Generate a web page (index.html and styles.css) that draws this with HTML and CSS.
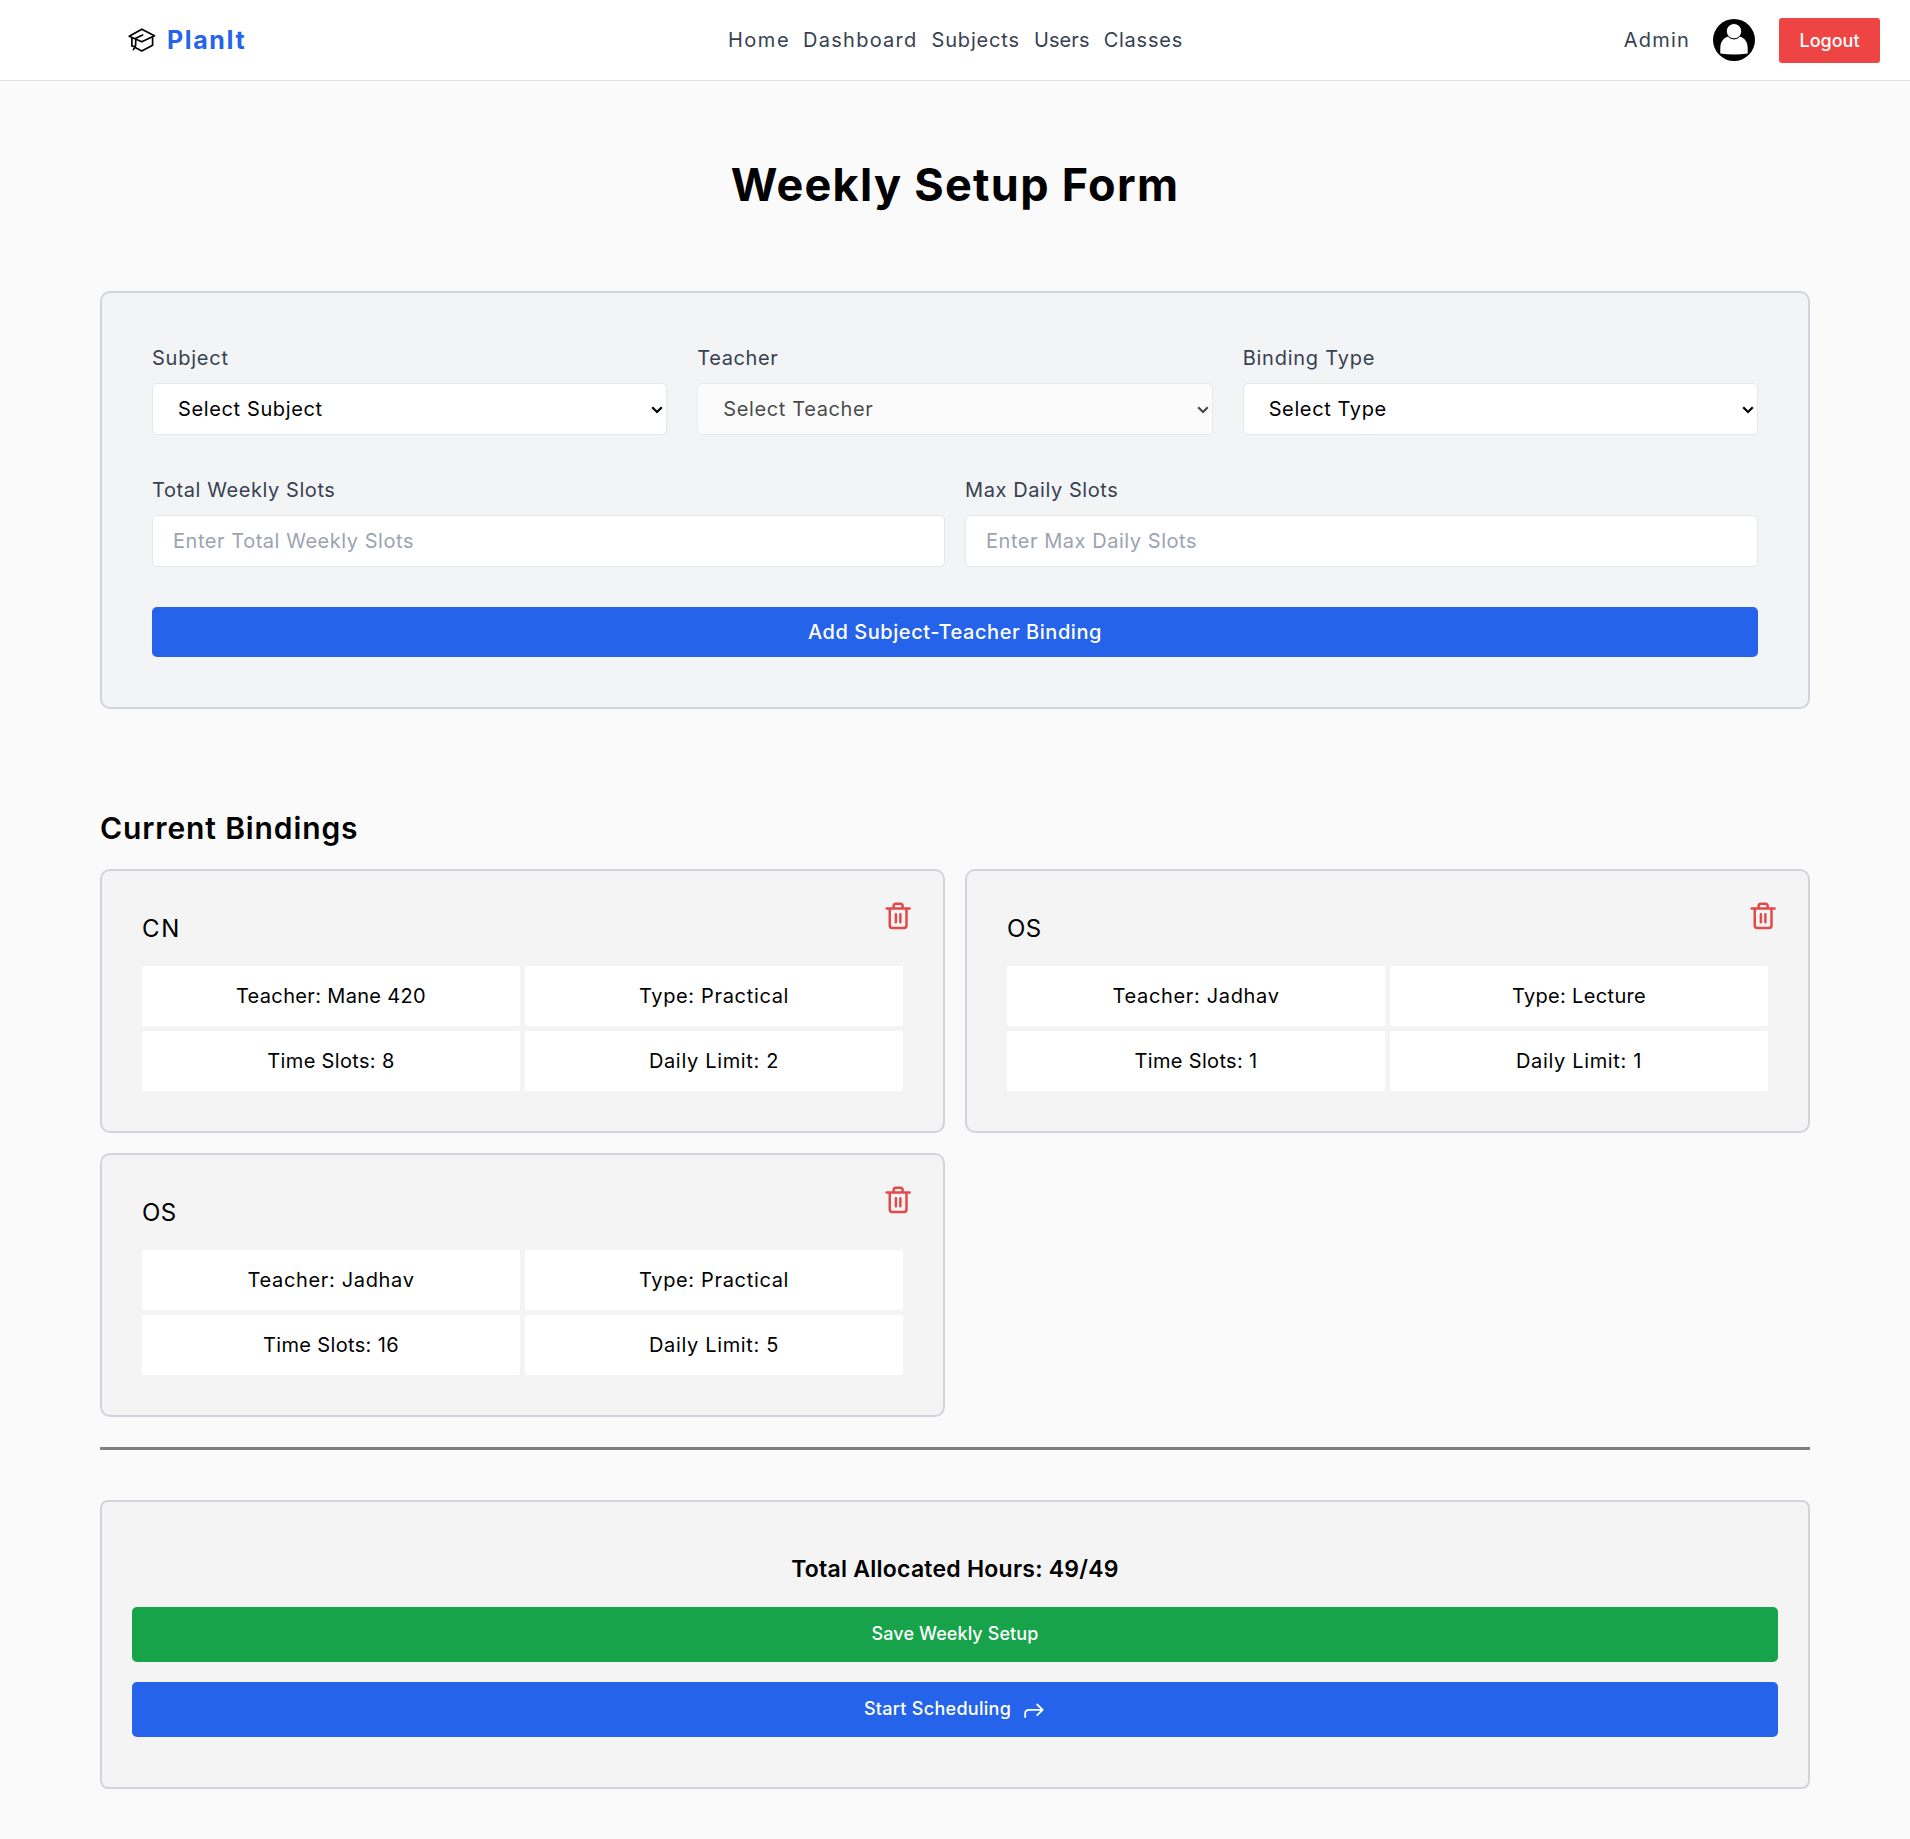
FILE: index.html
```html
<!DOCTYPE html>
<html lang="en">
<head>
<meta charset="utf-8">
<title>PlanIt - Weekly Setup</title>
<link rel="stylesheet" href="styles.css">
</head>
<body>
<svg class="sprite" aria-hidden="true">
  <symbol id="trash" viewBox="0 0 24 24">
    <path d="M5.4 6.200v13.400c0 1.100.8 1.900 1.900 1.900h9.600c1.100 0 1.900-.8 1.900-1.900V6.200M2.900 5.900h18.400M8.500 5.700V3.900c0-1 .8-1.800 1.800-1.800h3.600c1 0 1.800.8 1.800 1.800v1.800M10.300 10.600v6.300M13.900 10.600v6.300" fill="none" stroke="currentColor" stroke-width="2" stroke-linecap="round" stroke-linejoin="round"/>
  </symbol>
  <symbol id="chevron" viewBox="0 0 12 8">
    <path d="M1.200 1.200 6 6l4.800-4.800" fill="none" stroke="#000" stroke-width="2.200"/>
  </symbol>
</svg>
<header class="topbar">
  <a class="brand">
    <svg class="brand-icon" viewBox="0 0 28 26" fill="none" stroke="#000" stroke-width="1.7" stroke-linejoin="round" stroke-linecap="round">
      <path d="M13.8 2.2 26.5 8.8 13.8 14.8 1.2 9.2Z"/>
      <path d="M14.6 8 7.8 11.2 7.6 18.5 5.4 22.6M3.9 11v8l3.2.9M7.2 20.5l6.6 3.4 10.8-5.6V10.6"/>
    </svg>
    <span class="brand-name">PlanIt</span>
  </a>
  <nav class="nav">
    <a class="nav-home">Home</a><a class="nav-dashboard">Dashboard</a><a class="nav-subjects">Subjects</a><a class="nav-users">Users</a><a class="nav-classes">Classes</a>
  </nav>
  <div class="account">
    <span class="role">Admin</span>
    <svg class="avatar" viewBox="0 0 42 42">
      <circle cx="21" cy="21" r="21" fill="#000"/>
      <path d="M7.300 34.600V29c0-6.200 3.700-10.600 8.300-11.400 1.600 1.800 3.300 2.600 5.400 2.600s3.800-.8 5.400-2.600c4.600.8 8.300 5.200 8.300 11.400v5.600q-13.700 1.800-27.400 0Z" fill="#fff"/>
      <circle cx="21" cy="12.200" r="7.700" fill="#fff" stroke="#000" stroke-width="1"/>
    </svg>
    <button class="logout">Logout</button>
  </div>
</header>

<main class="page">
  <h1 class="title">Weekly Setup Form</h1>

  <form class="form-card">
    <div class="row row-3">
      <label class="field"><span class="label wide">Subject</span>
        <span class="picker"><select class="control select"><option>Select Subject</option></select><svg class="chevron"><use href="#chevron"/></svg></span></label>
      <label class="field"><span class="label">Teacher</span>
        <span class="picker is-disabled"><select class="control select" disabled><option>Select Teacher</option></select><svg class="chevron"><use href="#chevron"/></svg></span></label>
      <label class="field"><span class="label wide">Binding Type</span>
        <span class="picker"><select class="control select"><option>Select Type</option></select><svg class="chevron"><use href="#chevron"/></svg></span></label>
    </div>
    <div class="row row-2">
      <label class="field"><span class="label">Total Weekly Slots</span>
        <input class="control" type="text" placeholder="Enter Total Weekly Slots"></label>
      <label class="field"><span class="label">Max Daily Slots</span>
        <input class="control" type="text" placeholder="Enter Max Daily Slots"></label>
    </div>
    <button type="button" class="add">Add Subject-Teacher Binding</button>
  </form>

  <h2 class="section-title">Current Bindings</h2>
  <section class="bindings">
    <article class="binding">
      <svg class="trash"><use href="#trash"/></svg>
      <h3 class="code code-cn">CN</h3>
      <div class="facts">
        <div class="fact tight">Teacher: Mane 420</div><div class="fact">Type: Practical</div>
        <div class="fact tight">Time Slots: 8</div><div class="fact">Daily Limit: 2</div>
      </div>
    </article>
    <article class="binding">
      <svg class="trash"><use href="#trash"/></svg>
      <h3 class="code">OS</h3>
      <div class="facts">
        <div class="fact">Teacher: Jadhav</div><div class="fact tight">Type: Lecture</div>
        <div class="fact tight">Time Slots: 1</div><div class="fact">Daily Limit: 1</div>
      </div>
    </article>
    <article class="binding">
      <svg class="trash"><use href="#trash"/></svg>
      <h3 class="code">OS</h3>
      <div class="facts">
        <div class="fact">Teacher: Jadhav</div><div class="fact">Type: Practical</div>
        <div class="fact tight">Time Slots: 16</div><div class="fact">Daily Limit: 5</div>
      </div>
    </article>
  </section>

  <hr class="divider">

  <section class="summary">
    <p class="total">Total Allocated Hours: 49/49</p>
    <button class="action save">Save Weekly Setup</button>
    <button class="action start">Start Scheduling
      <svg class="arrow" viewBox="0 0 20 16" fill="none" stroke="currentColor" stroke-width="1.800" stroke-linecap="round" stroke-linejoin="round"><path d="M1.200 14V10.500C1.200 8 3 6.800 5.200 6.800H18.600M13.200 1.500l5.500 5.300-5.500 5.300"/></svg>
    </button>
  </section>
</main>
</body>
</html>
```
FILE: styles.css
```css
*, *::before, *::after { box-sizing: border-box; }

body {
  margin: 0;
  background: #fafafa;
  color: #000;
  font: 400 20px/30px Inter, "Open Sans", sans-serif;
}

h1, h2, h3, p { margin: 0; }
button { border: 0; padding: 0; color: #fff; font-family: inherit; font-weight: 550; }
.sprite { display: none; }

.topbar {
  display: grid;
  grid-template-columns: 601px 1fr 1fr;
  align-items: center;
  height: 81px;
  padding: 0 30px 0 127px;
  background: #fff;
  border-bottom: 1px solid #e0e2e5;
  color: #374151;
}
.brand { display: flex; align-items: center; gap: 10px; }
.brand-icon { width: 30px; height: 26px; }
.brand-name { color: #2563eb; font-size: 25px; font-weight: 700; letter-spacing: 1.6px; }
.nav { display: flex; gap: 14px; }
.nav-home { letter-spacing: 1.5px; margin-right: -1px; }
.nav-dashboard { letter-spacing: 1.26px; }
.nav-subjects { letter-spacing: .83px; }
.nav-users { letter-spacing: .1px; }
.nav-classes { letter-spacing: .76px; }
.account { display: flex; align-items: center; justify-content: flex-end; gap: 24px; }
.role { letter-spacing: 1.2px; margin-right: -1px; }
.avatar { width: 42px; height: 42px; }
.logout { width: 101px; height: 45px; border-radius: 3px; background: #ef4444; font-size: 18px; letter-spacing: 0; }

.page { padding: 75px 100px 50px; }
.title {
  margin-bottom: 77px;
  font-size: 45px;
  font-weight: 700;
  line-height: 58px;
  letter-spacing: 1.28px;
  text-align: center;
}

.form-card {
  height: 418px;
  padding: 50px;
  background: #f3f4f6;
  border: 2px solid #d1d5db;
  border-radius: 10px;
}
.row { display: grid; margin-bottom: 40px; }
.row-3 { grid-template-columns: repeat(3, 1fr); gap: 30px; }
.row-2 { grid-template-columns: repeat(2, 1fr); gap: 20px; }
.field { display: flex; flex-direction: column; gap: 10px; min-width: 0; }
.label { color: #374151; letter-spacing: .58px; }
.label.wide { letter-spacing: .76px; }
.control {
  display: block;
  width: 100%;
  height: 52px;
  padding: 10px 20px;
  background: #fff;
  border: 1px solid #e5e7eb;
  border-radius: 5px;
  color: #000;
  font: inherit;
  letter-spacing: .54px;
}
.picker { position: relative; }
.picker.is-disabled { opacity: .7; }
.select { appearance: none; padding-left: 25px; letter-spacing: .62px; }
.select:disabled { opacity: 1; }
.chevron { position: absolute; top: 23px; right: 4px; width: 12px; height: 8px; pointer-events: none; }
.control::placeholder { color: #9ca3af; opacity: 1; }
.add {
  display: block;
  width: 100%;
  height: 50px;
  border-radius: 5px;
  background: #2563eb;
  font-size: 20px;
  letter-spacing: .55px;
}

.section-title { margin: 97px 0 18px; font-size: 30px; font-weight: 600; line-height: 45px; letter-spacing: .88px; }
.bindings { display: grid; grid-template-columns: repeat(2, 1fr); gap: 20px; }
.binding {
  position: relative;
  height: 264px;
  padding: 40px;
  background: #f4f4f4;
  border: 2px solid #d1d5db;
  border-radius: 10px;
}
.trash { position: absolute; top: 30px; right: 30px; width: 30px; height: 30px; color: #e24a4a; }
.code { margin-bottom: 19px; font-size: 24px; font-weight: 400; line-height: 36px; letter-spacing: .4px; }
.code-cn { letter-spacing: 1.6px; }
.facts { display: grid; grid-template-columns: repeat(2, 1fr); gap: 5px; }
.fact {
  height: 60px;
  border-radius: 2px;
  background: #fff;
  line-height: 60px;
  text-align: center;
  letter-spacing: .66px;
}
.fact.tight { letter-spacing: .34px; }

.divider { height: 3px; margin: 30px 0 50px; border: 0; background: #808080; }

.summary {
  height: 289px;
  padding: 50px 30px;
  background: #f4f4f4;
  border: 2px solid #d1d5db;
  border-radius: 8px;
}
.total { margin-bottom: 20px; font-size: 23px; font-weight: 600; line-height: 35px; letter-spacing: .24px; text-align: center; }
.action {
  display: flex;
  align-items: center;
  justify-content: center;
  width: 100%;
  height: 55px;
  padding-bottom: 2px;
  border-radius: 5px;
  font-size: 18px;
}
.save { margin-bottom: 20px; background: #16a34a; letter-spacing: .08px; }
.start { gap: 13px; padding-right: 2px; background: #2563eb; letter-spacing: .28px; }
.arrow { width: 20px; height: 16px; margin-top: 4px; }
```
